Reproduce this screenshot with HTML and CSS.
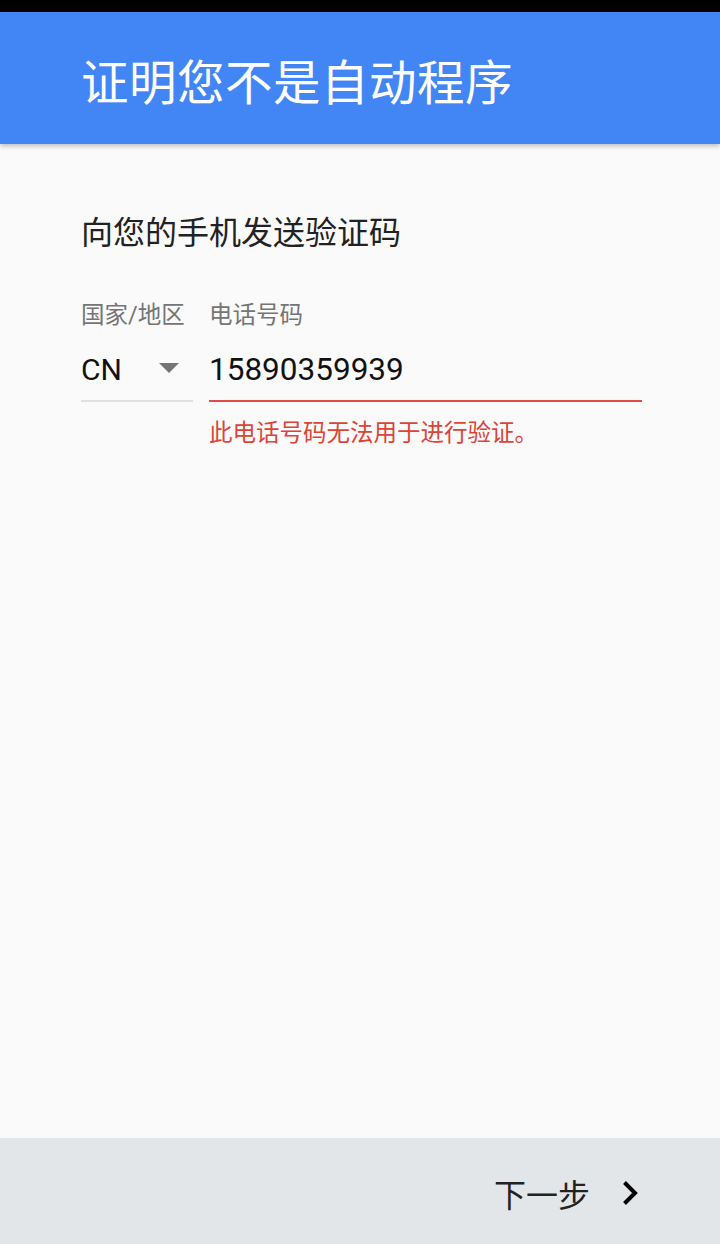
FILE: index.html
```html
<!DOCTYPE html>
<html lang="zh-CN">
<head>
    <meta charset="UTF-8">
    <meta name="viewport" content="width=device-width, initial-scale=1.0">
    <title>证明您不是自动程序</title>
    <link rel="stylesheet" href="styles.css">
</head>
<body>
    <div class="status-bar"></div>
    <header class="app-bar">
        <h1>证明您不是自动程序</h1>
    </header>
    <main class="content">
        <h2>向您的手机发送验证码</h2>
        <div class="fields">
            <div class="field country">
                <label>国家/地区</label>
                <div class="select">
                    <span>CN</span>
                    <svg class="caret" width="20" height="10" viewBox="0 0 20 10"><path d="M0 0h20L10 10z" fill="#757575"/></svg>
                </div>
            </div>
            <div class="field phone">
                <label>电话号码</label>
                <div class="input">15890359939</div>
                <div class="error">此电话号码无法用于进行验证。</div>
            </div>
        </div>
    </main>
    <footer class="nav-bar">
        <a href="#" class="next">
            <span>下一步</span>
            <svg class="chevron" width="16" height="24" viewBox="0 0 16 24"><path d="M2.5 1.5l10.5 10.5L2.5 22.5" fill="none" stroke="#000" stroke-width="4"/></svg>
        </a>
    </footer>
</body>
</html>
```

FILE: styles.css
```css
body {
    margin: 0;
    height: 1244px;
    display: flex;
    flex-direction: column;
    background: #fafafa;
    font-family: Roboto, "Noto Sans CJK SC", sans-serif;
}
.status-bar {
    height: 12px;
    background: #000;
}
.app-bar {
    height: 132px;
    background: #4286f5;
    display: flex;
    align-items: center;
    padding-left: 82px;
    box-shadow: 0 2px 5px rgba(0, 0, 0, 0.25);
    position: relative;
    z-index: 1;
}
.app-bar h1 {
    margin: 0;
    color: white;
    font-size: 47.5px;
    font-weight: 400;
    letter-spacing: 0.5px;
    position: relative;
    top: 1px;
    left: -1px;
}
.content {
    flex: 1;
    padding: 0 78px 0 81px;
}
.content h2 {
    margin: 63px 0 0;
    font-size: 32px;
    font-weight: 400;
    color: #222;
    line-height: 52px;
}
.fields {
    display: flex;
    gap: 16px;
    margin-top: 41px;
}
.field label {
    display: block;
    font-size: 23.5px;
    color: #757575;
    line-height: 30px;
}
.country {
    width: 112px;
}
.select {
    display: flex;
    justify-content: space-between;
    align-items: center;
    margin-top: 19px;
    height: 41px;
    border-bottom: 2px solid #e0e0e0;
    font-size: 30px;
    color: #111;
    padding-bottom: 10px;
}
.caret {
    margin-right: 14px;
    margin-top: -4px;
}
.phone {
    flex: 1;
}
.input {
    margin-top: 19px;
    height: 41px;
    line-height: 41px;
    border-bottom: 2px solid #df4b45;
    font-size: 31.5px;
    color: #111;
    padding-bottom: 10px;
}
.error {
    margin-top: 16px;
    font-size: 23.5px;
    color: #db4437;
    line-height: 30px;
}
.nav-bar {
    height: 106px;
    background: #e3e6e9;
    display: flex;
    justify-content: flex-end;
    align-items: center;
    padding-right: 82px;
}
.next {
    display: flex;
    align-items: center;
    gap: 32px;
    text-decoration: none;
    color: #222;
    font-size: 32px;
}
.next span {
    position: relative;
    top: 2px;
}
.chevron {
    position: relative;
    top: 2px;
}
```
